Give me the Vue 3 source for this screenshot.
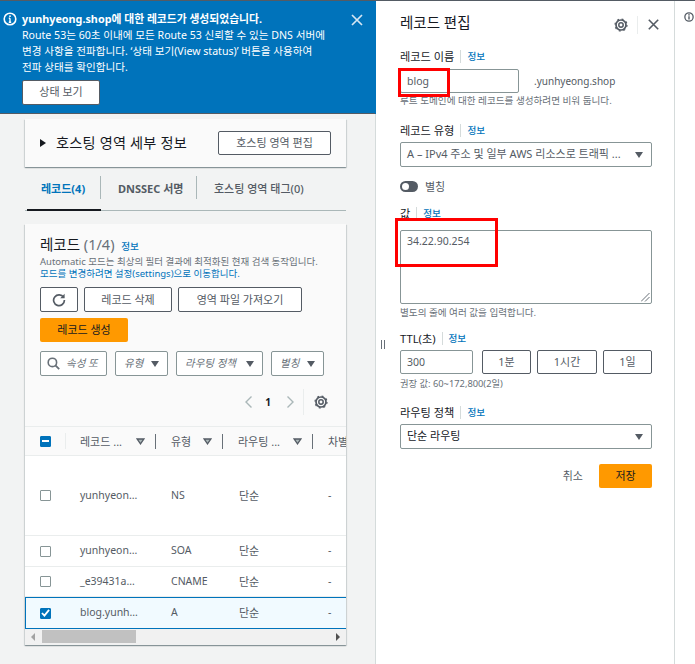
<script setup>
const rows = [
  { name: 'yunhyeon…', type: 'NS', cls: 'tall' },
  { name: 'yunhyeon…', type: 'SOA', cls: 'soa' },
  { name: '_e39431a…', type: 'CNAME', cls: 'cname' },
  { name: 'blog.yunh…', type: 'A', cls: 'sel', checked: true },
]
</script>

<template>
  <div class="page">
    <div class="left">
      <div class="banner">
        <svg class="b-info" width="14" height="14" viewBox="0 0 14 14"><circle cx="7" cy="7" r="5.8" fill="none" stroke="#fff" stroke-width="1.6"/><path d="M7 6.2v4M5.8 10.2h2.4M5.8 6.2H7" fill="none" stroke="#fff" stroke-width="1.4"/><rect x="6.2" y="3.4" width="1.6" height="1.6" fill="#fff"/></svg>
        <div class="b-body">
          <div class="b-title">yunhyeong.shop에 대한 레코드가 생성되었습니다.</div>
          <div class="b-text">Route 53는 60초 이내에 모든 Route 53 신뢰할 수 있는 DNS 서버에<br>변경 사항을 전파합니다. ‘상태 보기(View status)’ 버튼을 사용하여<br>전파 상태를 확인합니다.</div>
          <button class="b-btn">상태 보기</button>
        </div>
        <svg class="b-close" width="12" height="12" viewBox="0 0 12 12"><path d="M1 1l10 10M11 1L1 11" stroke="#d5e6f3" stroke-width="1.7" fill="none"/></svg>
      </div>

      <div class="content">
        <div class="details card">
          <span class="tri"></span>
          <span class="d-title">호스팅 영역 세부 정보</span>
          <button class="btn d-btn">호스팅 영역 편집</button>
        </div>

        <div class="tabs">
          <div class="tab active">레코드(4)</div>
          <div class="tab t2">DNSSEC 서명</div>
          <div class="tab t3">호스팅 영역 태그(0)</div>
        </div>

        <div class="records card">
          <div class="r-head">
            <div class="r-title">레코드 <span class="count">(1/4)</span> <a class="info">정보</a></div>
            <div class="r-desc">Automatic 모드는 최상의 필터 결과에 최적화된 현재 검색 동작입니다.</div>
            <div class="r-link">모드를 변경하려면 설정(settings)으로 이동합니다.</div>
            <div class="actions">
              <button class="btn refresh">
                <svg width="14" height="14" viewBox="0 0 14 14"><path d="M11.6 4.4A5.4 5.4 0 1 0 12.4 7" fill="none" stroke="#545b64" stroke-width="1.7"/><path d="M12.6 0.8v4.4H8.2z" fill="#545b64"/></svg>
              </button>
              <button class="btn del">레코드 삭제</button>
              <button class="btn imp">영역 파일 가져오기</button>
            </div>
            <button class="primary create">레코드 생성</button>
            <div class="filters">
              <div class="f search">
                <svg width="13" height="13" viewBox="0 0 13 13"><circle cx="5.4" cy="5.4" r="4.2" fill="none" stroke="#687078" stroke-width="1.6"/><path d="M8.4 8.4l3.8 3.8" stroke="#687078" stroke-width="1.8"/></svg>
                <span class="ph">속성 또</span>
              </div>
              <div class="f f-type"><span class="ph">유형</span><i class="caret"></i></div>
              <div class="f f-route"><span class="ph">라우팅 정책</span><i class="caret"></i></div>
              <div class="f f-alias"><span class="ph">별칭</span><i class="caret"></i></div>
            </div>
            <div class="pager">
              <svg width="9" height="14" viewBox="0 0 9 14"><path d="M7.5 1.5L2 7l5.5 5.5" fill="none" stroke="#aab7b8" stroke-width="1.4"/></svg>
              <b>1</b>
              <svg width="9" height="14" viewBox="0 0 9 14"><path d="M1.5 1.5L7 7l-5.5 5.5" fill="none" stroke="#aab7b8" stroke-width="1.4"/></svg>
              <span class="pg-sep">
                <svg width="14" height="14" viewBox="0 0 14 14"><circle cx="7" cy="7" r="2.2" fill="none" stroke="#545b64" stroke-width="1.5"/><circle cx="7" cy="7" r="5" fill="none" stroke="#545b64" stroke-width="1.7"/><circle cx="7" cy="7" r="6" fill="none" stroke="#545b64" stroke-width="1.2" stroke-dasharray="2 2.7"/></svg>
              </span>
            </div>
          </div>

          <div class="table">
            <div class="thead">
              <div class="h0"><span class="cb minus"></span></div>
              <div class="th h1"><span>레코드 ...</span><svg class="sort" width="9" height="7" viewBox="0 0 9 7"><path d="M1.2 1h6.6L4.5 5.8z" fill="#aab7b8" stroke="#545b64" stroke-width="1.3"/></svg></div>
              <div class="th h2"><span>유형</span><svg class="sort" width="9" height="7" viewBox="0 0 9 7"><path d="M1.2 1h6.6L4.5 5.8z" fill="#aab7b8" stroke="#545b64" stroke-width="1.3"/></svg></div>
              <div class="th h3"><span>라우팅 ...</span><svg class="sort" width="9" height="7" viewBox="0 0 9 7"><path d="M1.2 1h6.6L4.5 5.8z" fill="#aab7b8" stroke="#545b64" stroke-width="1.3"/></svg></div>
              <div class="th h4"><span>차별</span></div>
            </div>
            <div v-for="r in rows" :key="r.type" class="tr" :class="r.cls">
              <div class="c0">
                <span class="cb" :class="{ on: r.checked }">
                  <svg v-if="r.checked" width="9" height="8" viewBox="0 0 10 9"><path d="M1 4.5l2.8 3L9 1" fill="none" stroke="#fff" stroke-width="2"/></svg>
                </span>
              </div>
              <div class="c1 td">{{ r.name }}</div>
              <div class="c2 td">{{ r.type }}</div>
              <div class="c3 td route">단순</div>
              <div class="c4 td">-</div>
            </div>
          </div>

          <div class="scroll">
            <i class="arr al"></i>
            <span class="thumb"></span>
            <i class="arr ar"></i>
          </div>
        </div>
      </div>
    </div>

    <div class="panel">
      <span class="grip"></span>
      <span class="strip"></span>
      <div class="p-head">
        <div class="p-title">레코드 편집</div>
        <svg class="p-gear" width="14" height="14" viewBox="0 0 14 14"><circle cx="7" cy="7" r="2.2" fill="none" stroke="#545b64" stroke-width="1.5"/><circle cx="7" cy="7" r="5" fill="none" stroke="#545b64" stroke-width="1.7"/><circle cx="7" cy="7" r="6" fill="none" stroke="#545b64" stroke-width="1.2" stroke-dasharray="2 2.7"/></svg>
        <span class="p-sep"></span>
        <svg class="p-x" width="11" height="11" viewBox="0 0 11 11"><path d="M.8.8l9.4 9.4M10.2.8L.8 10.2" stroke="#545b64" stroke-width="1.6" fill="none"/></svg>
      </div>

      <div class="lab l-name">레코드 이름<span class="lsep"></span><a class="info">정보</a></div>
      <div class="name-row">
        <div class="inp name">blog</div>
        <span class="domain">.yunhyeong.shop</span>
      </div>
      <div class="hint h-name">루트 도메인에 대한 레코드를 생성하려면 비워 둡니다.</div>

      <div class="lab l-type">레코드 유형<span class="lsep"></span><a class="info">정보</a></div>
      <div class="inp select s-type"><span>A – IPv4 주소 및 일부 AWS 리소스로 트래픽 ...</span><i class="caret"></i></div>

      <div class="alias">
        <span class="toggle"><i></i></span>
        <span class="alias-t">별칭</span>
      </div>

      <div class="lab l-val">값<span class="lsep"></span><a class="info">정보</a></div>
      <div class="inp area">34.22.90.254
        <svg class="resize" width="9" height="9" viewBox="0 0 9 9"><path d="M0 8.5L8.5 0M4 8.5L8.5 4" stroke="#687078" stroke-width="1"/></svg>
      </div>
      <div class="hint h-val">별도의 줄에 여러 값을 입력합니다.</div>

      <div class="lab l-ttl">TTL(초)<span class="lsep"></span><a class="info">정보</a></div>
      <div class="ttl">
        <div class="inp t-in">300</div>
        <button class="btn t1">1분</button>
        <button class="btn t2b">1시간</button>
        <button class="btn t3b">1일</button>
      </div>
      <div class="hint h-ttl">권장 값: 60~172,800(2일)</div>

      <div class="lab l-route">라우팅 정책<span class="lsep"></span><a class="info">정보</a></div>
      <div class="inp select s-route"><span>단순 라우팅</span><i class="caret"></i></div>

      <div class="foot">
        <span class="cancel">취소</span>
        <button class="primary save">저장</button>
      </div>
    </div>

    <div class="rail">
      <svg width="10" height="10" viewBox="0 0 14 14"><circle cx="7" cy="7" r="5.8" fill="none" stroke="#545b64" stroke-width="1.8"/><path d="M7 6v4.4" stroke="#545b64" stroke-width="2"/><rect x="6" y="3" width="2" height="2" fill="#545b64"/></svg>
    </div>

    <span class="mark m1"></span>
    <span class="mark m2"></span>
  </div>
</template>

<style>
html, body { margin: 0; padding: 0; background: #f2f3f3; }
</style>

<style scoped>
.page {
  position: relative;
  display: flex;
  width: 695px;
  height: 664px;
  overflow: hidden;
  border-top: 1px solid #545b64;
  box-sizing: border-box;
  background: #f2f3f3;
  color: #16191f;
  font-family: "Noto Sans", "Noto Sans CJK KR", sans-serif;
  font-size: 10px;
}
button { font-family: inherit; margin: 0; padding: 0 0 2px; cursor: pointer; }
.info { color: #0073bb; font-size: 9.6px; font-weight: 500; }

.left { width: 375px; flex: none; }
.banner {
  position: relative;
  box-sizing: border-box;
  height: 113px;
  background: #0073bb;
  border-bottom: 1px solid #545b64;
  color: #fff;
  padding: 10px 0 0 22px;
}
.b-info { position: absolute; left: 3px; top: 11px; }
.b-close { position: absolute; left: 351px; top: 13px; }
.b-title { font-size: 10.8px; font-weight: 700; line-height: 16px; white-space: nowrap; }
.b-text { font-size: 10.6px; line-height: 16.2px; white-space: nowrap; }
.b-btn {
  display: block;
  margin-top: 4px;
  width: 78px;
  height: 25px;
  background: #fff;
  border: 1px solid #545b64;
  border-radius: 2px;
  color: #545b64;
  font-size: 11px;
  font-weight: 400;
}

.content { padding: 5px 29px 0 25px; }
.card {
  background: #fff;
  box-shadow: 0 1px 1px rgba(0, 28, 36, .3), 1px 1px 1px rgba(0, 28, 36, .1), -1px 1px 1px rgba(0, 28, 36, .1);
}
.btn {
  background: #fff;
  border: 1px solid #545b64;
  border-radius: 2px;
  color: #545b64;
  font-size: 11px;
  font-weight: 400;
}
.primary {
  background: #ff9900;
  border: 0;
  border-radius: 2px;
  color: #16191f;
  font-size: 11px;
  font-weight: 400;
}

.details {
  display: flex;
  align-items: center;
  height: 48px;
  background: #fafafa;
  padding: 0 15px;
  box-sizing: border-box;
}
.tri {
  width: 0; height: 0;
  border-left: 6px solid #16191f;
  border-top: 4px solid transparent;
  border-bottom: 4px solid transparent;
  margin-right: 10px;
}
.d-title { font-size: 14.2px; font-weight: 400; letter-spacing: .2px; padding-bottom: 3px; }
.d-btn { margin-left: auto; width: 113px; height: 24px; flex: none; }

.tabs {
  display: flex;
  height: 34px;
  margin-top: 9px;
  border-bottom: 1px solid #aab7b8;
  position: relative;
}
.tab {
  display: flex;
  align-items: center;
  font-size: 11px;
  font-weight: 700;
  color: #545b64;
  height: 23px;
  white-space: nowrap;
  box-sizing: border-box;
}
.tab.active { color: #0073bb; width: 76px; padding-left: 16px; border-right: 1px solid #aab7b8; }
.tab.active::after {
  content: "";
  position: absolute;
  left: 2px;
  bottom: -1px;
  width: 74px;
  height: 2px;
  background: #16191f;
}
.t2 { width: 96px; padding-left: 17px; border-right: 1px solid #aab7b8; }
.t3 { padding-left: 17px; font-weight: 500; }

.records { margin-top: 13px; height: 421px; display: flex; flex-direction: column; }
.r-head { background: #fafafa; padding: 10px 15px 0; height: 203px; box-sizing: border-box; border-bottom: 1px solid #eaeded; }
.r-title { font-size: 14.5px; font-weight: 400; height: 20px; line-height: 20px; white-space: nowrap; }
.count { color: #687078; font-weight: 400; }
.r-title .info { margin-left: 3px; }
.r-desc { color: #687078; font-size: 9.5px; height: 12px; line-height: 12px; margin-top: 2px; white-space: nowrap; }
.r-link { color: #0073bb; font-size: 9.5px; height: 12px; line-height: 12px; white-space: nowrap; }
.actions { display: flex; gap: 6px; margin-top: 7px; }
.refresh { width: 38px; height: 25px; display: flex; align-items: center; justify-content: center; padding: 0; }
.del { width: 88px; height: 25px; }
.imp { width: 124px; height: 25px; }
.create { display: block; width: 88px; height: 24px; margin-top: 6px; }
.filters { display: flex; gap: 8px; margin-top: 9px; }
.f {
  box-sizing: border-box;
  height: 25px;
  background: #fff;
  border: 1px solid #879596;
  border-radius: 2px;
  display: flex;
  align-items: center;
  justify-content: space-between;
  padding: 0 8px;
}
.ph { color: #687078; font-style: italic; font-size: 10.5px; white-space: nowrap; padding-bottom: 2px; }
.search { width: 67px; justify-content: flex-start; gap: 6px; padding: 0 6px; }
.f-type { width: 53px; }
.f-route { width: 87px; }
.f-alias { width: 53px; }
.caret {
  display: block;
  flex: none;
  width: 0; height: 0;
  border-left: 4px solid transparent;
  border-right: 4px solid transparent;
  border-top: 6px solid #545b64;
}
.pager {
  display: flex;
  align-items: center;
  justify-content: flex-end;
  margin-top: 13px;
  height: 26px;
  color: #16191f;
  padding-right: 3px;
}
.pager b { font-size: 10px; font-weight: 700; margin: 0 15px 0 12px; }
.pg-sep { display: flex; align-items: center; height: 26px; border-left: 1px solid #eaeded; padding-left: 10px; margin-left: 8px; }

.table { flex: none; }
.thead { display: flex; height: 29px; box-sizing: border-box; background: #fafafa; border-bottom: 1px solid #eaeded; align-items: center; overflow: hidden; }
.h0 { width: 41px; height: 16px; flex: none; margin-right: 14px; padding-left: 15px; box-sizing: border-box; border-right: 1px solid #eaeded; display: flex; align-items: center; }
.th {
  display: flex;
  align-items: center;
  justify-content: space-between;
  flex: none;
  height: 15px;
  color: #545b64;
  font-size: 11px;
  font-weight: 400;
  white-space: nowrap;
  box-sizing: border-box;
  border-right: 1px solid #687078;
  padding-right: 10px;
}
.h1 { width: 76px; }
.h2 { width: 67px; padding-left: 15px; }
.h3 { width: 90px; padding-left: 15px; }
.th.h4 { flex: 1; min-width: 0; border: 0; padding-left: 15px; overflow: hidden; }
.sort { flex: none; display: block; }
.cb { display: flex; align-items: center; justify-content: center; box-sizing: border-box; width: 11px; height: 11px; background: #fff; border: 1px solid #879596; border-radius: 1px; }
.cb.minus { background: #0073bb; border-color: #0073bb; }
.cb.minus::after { content: ""; width: 7px; height: 1.5px; background: #fff; }
.cb.on { background: #0073bb; border-color: #0073bb; }
.tr { display: flex; align-items: center; background: #fff; box-sizing: border-box; border-bottom: 1px solid #eaeded; }
.c0 { width: 55px; flex: none; padding-left: 15px; box-sizing: border-box; display: flex; align-items: center; }
.c1 { width: 91px; flex: none; }
.c2 { width: 68px; flex: none; }
.c3 { width: 89px; flex: none; }
.c4 { flex: 1; min-width: 0; }
.td { color: #545b64; font-size: 10.5px; white-space: nowrap; padding-bottom: 2px; }
.route { font-size: 11px; }
.tall { height: 80px; }
.soa { height: 31px; }
.cname { height: 30px; }
.sel { height: 32px; background: #f1faff; border: 1px solid #0073bb; border-right: 0; }
.sel .c0 { width: 54px; padding-left: 14px; }
.scroll {
  height: 16px;
  background: #f1f1f1;
  position: relative;
  flex: none;
}
.thumb { position: absolute; left: 17px; top: 1px; width: 94px; height: 13px; background: #c1c1c1; }
.arr { position: absolute; top: 4px; width: 0; height: 0; border-top: 4px solid transparent; border-bottom: 4px solid transparent; }
.al { left: 6px; border-right: 4px solid #a3a3a3; }
.ar { left: 311px; border-left: 4px solid #505050; }

.panel {
  position: relative;
  box-sizing: border-box;
  width: 300px;
  flex: none;
  height: 663px;
  background: #fff;
  border-left: 1px solid #d5dbdb;
  border-right: 1px solid #d5dbdb;
  padding: 10px 22px 0 24px;
}
.strip { position: absolute; left: -1px; top: 0; width: 1px; height: 113px; background: #0073bb; }
.grip { position: absolute; left: 5px; top: 339px; width: 2px; height: 9px; border-left: 1.5px solid #687078; border-right: 1.5px solid #687078; }
.p-head { height: 22px; position: relative; display: flex; align-items: center; }
.p-title { font-size: 14.5px; font-weight: 400; padding-bottom: 2px; }
.p-gear { position: absolute; left: 214px; top: 7px; }
.p-sep { position: absolute; left: 237px; top: 5px; width: 1px; height: 18px; background: #eaeded; }
.p-x { position: absolute; left: 248px; top: 8px; }
.lab { display: flex; align-items: center; font-size: 11.2px; font-weight: 400; height: 16px; white-space: nowrap; }
.lsep { width: 1px; height: 13px; background: #d5dbdb; margin: 0 6px; }
.l-name { margin-top: 15px; }
.name-row { display: flex; align-items: center; margin-top: 5px; }
.inp {
  box-sizing: border-box;
  background: #fff;
  border: 1px solid #879596;
  border-radius: 2px;
  color: #545b64;
  font-size: 10.5px;
  padding: 0 6px;
  display: flex;
  align-items: center;
}
.name { width: 119px; height: 24px; padding-bottom: 1px; }
.domain { margin-left: 15px; color: #545b64; font-size: 10px; padding-bottom: 1px; }
.hint { color: #687078; font-size: 9.6px; height: 12px; line-height: 12px; white-space: nowrap; }
.h-name { margin-top: 2px; }
.l-type { margin-top: 15px; }
.select { justify-content: space-between; width: 252px; height: 25px; white-space: nowrap; margin-top: 4px; padding-right: 8px; font-size: 11px; }
.select span { margin-bottom: 3px; }
.s-route { color: #16191f; }
.alias { display: flex; align-items: center; height: 18px; margin-top: 10px; gap: 7px; }
.toggle { display: block; width: 18px; height: 11px; border-radius: 6px; background: #545b64; position: relative; }
.toggle i { position: absolute; left: 2px; top: 2px; width: 7px; height: 7px; border-radius: 50%; background: #fff; }
.alias-t { font-size: 11px; color: #545b64; }
.l-val { margin-top: 10px; }
.area { display: block; position: relative; width: 252px; height: 74px; margin-top: 9px; padding: 3px 6px; }
.resize { position: absolute; right: 1px; bottom: 1px; }
.h-val { margin-top: 3px; }
.l-ttl { margin-top: 11px; }
.ttl { display: flex; margin-top: 4px; }
.t-in { width: 73px; height: 24px; flex: none; }
.t1 { width: 49px; height: 24px; margin-left: 9px; flex: none; }
.t2b { width: 60px; height: 24px; margin-left: 6px; flex: none; }
.t3b { width: 49px; height: 24px; margin-left: 6px; flex: none; }
.h-ttl { margin-top: 4px; font-size: 9.3px; }
.l-route { margin-top: 14px; }
.foot { display: flex; align-items: center; justify-content: flex-end; margin-top: 15px; }
.cancel { color: #545b64; font-size: 11px; margin-right: 16px; padding-bottom: 2px; }
.save { width: 53px; height: 24px; }

.rail { flex: 1; background: #fff; padding: 10px 0 0 9px; }

.mark { position: absolute; border: 3px solid #f00; box-sizing: border-box; }
.m1 { left: 398px; top: 67px; width: 52px; height: 29px; }
.m2 { left: 395px; top: 217px; width: 103px; height: 49px; }
</style>
